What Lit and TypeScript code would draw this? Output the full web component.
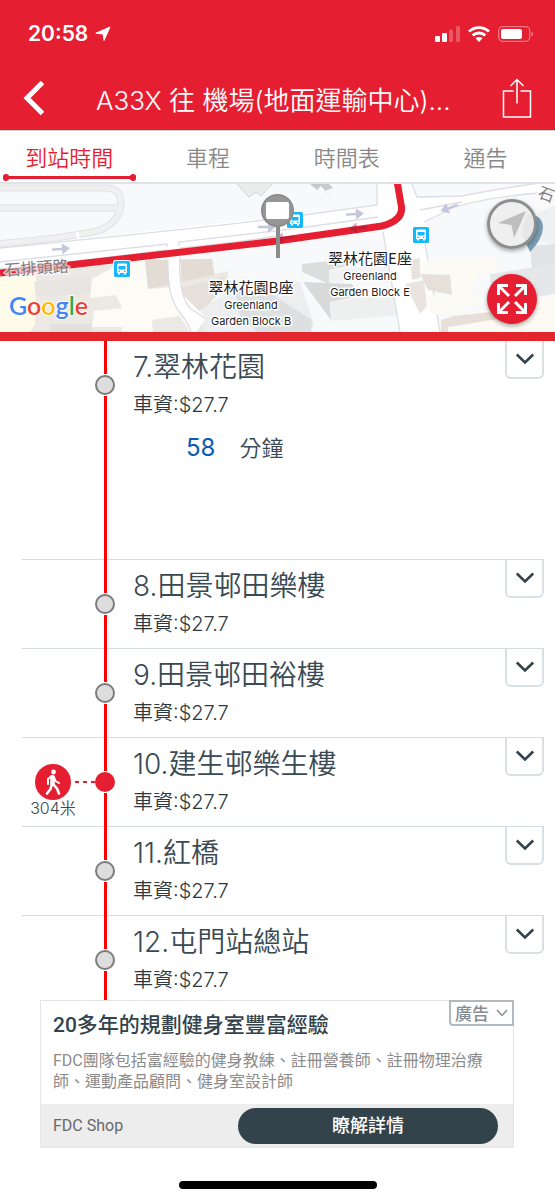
import { LitElement, html, css, svg, nothing } from "lit";
import { customElement, property, state } from "lit/decorators.js";

interface Stop {
  no: number;
  name: string;
  fare: string;
  minutes?: number;
  walk?: string;
}

const STOPS: Stop[] = [
  { no: 7, name: "翠林花園", fare: "$27.7", minutes: 58 },
  { no: 8, name: "田景邨田樂樓", fare: "$27.7" },
  { no: 9, name: "田景邨田裕樓", fare: "$27.7" },
  { no: 10, name: "建生邨樂生樓", fare: "$27.7", walk: "304米" },
  { no: 11, name: "紅橋", fare: "$27.7" },
  { no: 12, name: "屯門站總站", fare: "$27.7" },
];

const TABS = ["到站時間", "車程", "時間表", "通告"];

@customElement("status-bar")
class StatusBar extends LitElement {
  static styles = css`
    :host {
      display: flex;
      align-items: center;
      justify-content: space-between;
      height: 68px;
      padding: 0 21px 0 28px;
    }
    .time {
      display: flex;
      align-items: center;
      gap: 7px;
      font-size: 21px;
      font-weight: 600;
      line-height: 24px;
    }
    .signals {
      display: flex;
      align-items: center;
      gap: 8px;
    }
    svg {
      display: block;
    }
  `;
  render() {
    return html`
      <div class="time">
        <span>20:58</span>
        <svg width="16" height="16" viewBox="0 0 16 16" fill="#fff" stroke="#fff" stroke-width="1" stroke-linejoin="round">
          <path d="M15 1 9 14.500 8.200 8 .8 7.200z" />
        </svg>
      </div>
      <div class="signals">
        <svg width="25" height="16" viewBox="0 0 25 16" fill="#fff">
          <rect x="0" y="10" width="5" height="6" rx="1" />
          <rect x="7" y="7" width="5" height="9" rx="1" />
          <rect x="14" y="3.500" width="4" height="12.500" rx="1" opacity=".25" />
          <rect x="21" y="0" width="4" height="16" rx="1" opacity=".25" />
        </svg>
        <svg width="22" height="16" viewBox="0 0 22 16" fill="none" stroke="#fff" stroke-width="2.900">
          <path d="M1 5.500C6.500.3 15.500.3 21 5.500" />
          <path d="M4.700 9.400c3.600-3.300 9-3.300 12.600 0" />
          <path d="M7.500 12.200c2-1.700 5-1.700 7 0L11 16z" fill="#fff" stroke="none" />
        </svg>
        <svg width="36" height="16" viewBox="0 0 36 16">
          <rect x=".7" y=".7" width="31" height="14.600" rx="4" fill="none" stroke="#fff" stroke-opacity=".4" stroke-width="1.300" />
          <rect x="3" y="3" width="21" height="10" rx="2" fill="#fff" />
          <path d="M33.500 5.500c2 .8 2 4.200 0 5z" fill="#fff" opacity=".45" />
        </svg>
      </div>
    `;
  }
}

const busStop = (x: number, y: number) => svg`
  <g transform="translate(${x} ${y})">
    <rect x="-1" y="-1" width="18" height="18" rx="2" fill="#fff" />
    <rect width="16" height="16" rx="1.500" fill="#14b9fb" />
    <path d="M4 2.500h8l1 1V12h-1v1.500h-2V12H6v1.500H4V12H3V3.500z" fill="#fff" />
    <path d="M4.500 5h7v3.500h-7zM4.500 9.800H6V11H4.500zM10 9.800h1.500V11H10z" fill="#14b9fb" />
  </g>`;

const arrow = (x: number, y: number, turn: number, color = "#c3c6dc") => svg`
  <path transform="translate(${x} ${y}) rotate(${turn})" fill="${color}"
    d="M-9-1.200H1V-5.500L9 0 1 5.500V1.200H-9z" />`;

@customElement("route-map")
class RouteMap extends LitElement {
  static styles = css`
    :host {
      display: block;
      position: relative;
      border-bottom: 9px solid #e3262e;
      background: #f8f9fb;
    }
    .canvas {
      display: block;
      width: 100%;
      height: 148px;
    }
    .zh {
      font-family: "Noto Sans CJK TC", sans-serif;
      font-size: 15px;
      font-weight: 400;
    }
    .en {
      font-size: 11px;
      font-weight: 400;
    }
    .place {
      fill: #1d1d1f;
      stroke: #fff;
      stroke-width: 3px;
      stroke-linejoin: round;
      paint-order: stroke;
      text-anchor: middle;
    }
    .street {
      fill: #7c7c80;
      stroke: #fff;
      stroke-opacity: 0.7;
      stroke-width: 3px;
      paint-order: stroke;
      font-size: 16px;
    }
    .logo {
      font-family: Lato, sans-serif;
      font-size: 25px;
      font-weight: 600;
      stroke: #fff;
      stroke-width: 2px;
      paint-order: stroke;
    }
    .tools {
      position: absolute;
      top: 15px;
      right: 18px;
      display: flex;
      flex-direction: column;
      gap: 25px;
    }
    button {
      display: grid;
      place-items: center;
      width: 50px;
      height: 50px;
      padding: 0;
      border: 0;
      border-radius: 50%;
      background: #e51f31;
      box-shadow: 0 2px 4px rgba(0, 0, 0, 0.35);
    }
    .locate {
      border: 3px solid #8e8e8e;
      background: rgba(238, 238, 238, 0.92);
    }
  `;
  render() {
    return html`
      <svg class="canvas" viewBox="0 0 555 148" preserveAspectRatio="xMidYMid slice">
        <rect width="555" height="148" fill="#f8f9fb" />
        <path d="M0 88 88 80 212 75 215 90 228 87 228 97 214 103 205 148H0z" fill="#ece8e4" />
        <path d="M0 92 36 92 35 140 30 148H0z" fill="#fffbe9" />
        <path d="M34 98 90 92 92 110 36 112z" fill="#e9e5e2" />
        <path d="M120 80 145 77 150 105 173 103 179 132 152 136 153 148H122V143H92L94 127 122 124 116 111 90 114 92 95z" fill="#fdfbf5" />
        <path d="M145 76 212 75 214 91 148 105z" fill="#e3dcd5" />
        <path d="M182 104 225 92 222 107 198 130 184 122z" fill="#e6e0da" />
        <path d="M50 140H92V148H50z" fill="#e4e0dd" />
        <path d="M197 128 240 100 300 98 314 140 310 148H205z" fill="#eceef0" />
        <path d="M235 108 262 104 290 122 312 136 311 148H258L240 132z" fill="#dedfe0" />

        <path d="M302 80 340 76 348 82 329 86V100L302 88z" fill="#dcdddd" />
        <path d="M329 86 410 78 412 94 329 99z" fill="#f1f2f3" />
        <path d="M303 98 352 100 360 112 330 118 331 136z" fill="#d9d9d9" />
        <path d="M331 118 412 106 416 130 331 137z" fill="#eeefef" />

        <g fill="none" stroke-linejoin="round">
          <path d="M-5 4H106Q121 4 121 20 120 38 100 46 70 54-5 60M-5 24H121" stroke="#e1e1e3" stroke-width="7" />
          <path d="M-5 4H106Q121 4 121 20 120 38 100 46 70 54-5 60M-5 24H121" stroke="#f0f0f1" stroke-width="5" />
        </g>
        <path d="M77 48 79 58" stroke="#fff" stroke-width="3" />

        <path d="M0 64 378 21V0H412L417 13 462 12 490 8 555-3V8L482 17 455 24 425 38V59L440 148H400L384 47 180 68 182 110 206 134 196 148H190L171 118 167 70 0 88z" fill="#fff" />
        <g fill="none" stroke="#dcdde5" stroke-width="1.300">
          <path d="M0 64Q190 45 282 34L377 21V0" />
          <path d="M0 78Q90 68 167 60V63M0 85Q90 76 167 66M179 62V58L300 44 378 33M180 64Q250 57 276 52" />
          <path d="M412 0 417 13 462 12Q500 4 555-3M424 38 455 23Q490 12 555 8M420 26 462 18" />
          <path d="M383 48 400 148M425 59 440 148M168 76Q167 112 178 126T191 148M180 72Q178 110 190 124L206 135" />
        </g>

        <path d="M420 77 496 73 498 88 476 92 473 112 492 118 464 124 462 131 430 130 428 112 452 110 448 88 420 92z" fill="#fcfaf4" />
        <path d="M410 76 420 74V94L412 96z" fill="#e9e3de" />
        <path d="M420 90 450 91 452 111 428 106z" fill="#e7e0da" />
        <path d="M405 100 424 96 427 122 420 130 414 118z" fill="#e9e4df" />
        <path d="M441 136 454 132 555 112V148H445z" fill="#fcfaf2" />
        <path d="M441 136 454 132 500 127 498 135 448 143V148H441z" fill="#e7dfd8" />
        <path d="M530 62 555 60V82L532 84z" fill="#e2e3e4" />
        <path d="M490 90 555 80V110L492 120z" fill="#e6e7e8" />
        <path d="M538 28 555 22V60L540 58z" fill="#eff0f2" />

        <path d="M237 0 249 13 256 8 261 12 272 0" fill="#ececea" stroke="#d2d2d2" />
        <path d="M310 0 317 6 321 2 330 12 325 7 333 4 329 0z" fill="#c9c9c9" />

        <path d="M0 89 277 57 382 42Q405 36 401 20L397-3" fill="none" stroke="#e51f31" stroke-width="7" />
        ${arrow(61, 65, -4)} ${arrow(267, 43, 0)} ${arrow(355, 30, -4)} ${arrow(449, 24, 160)}
        ${arrow(358, 44, 175, "rgba(120,20,60,.35)")} ${arrow(284, 54, 175, "rgba(120,20,60,.35)")}

        <path d="M526 30Q543 30 543 44 542 56 530 68L522 50z" fill="#7a9db4" />
        ${busStop(114, 77)} ${busStop(287, 28)} ${busStop(413, 43)}

        <rect x="276" y="42" width="4" height="32" fill="#8b8b8b" />
        <circle cx="277.500" cy="26.500" r="16.500" fill="#969696" />
        <circle cx="277.500" cy="26.500" r="15.800" fill="none" stroke="#858585" />
        <rect x="266" y="18" width="23" height="17" rx="2" fill="#fff" />

        <text class="zh street" transform="translate(5 92) rotate(-4)">石排頭路</text>
        <text class="zh street" transform="translate(537 13) rotate(20)">石</text>
        <text class="zh place" x="370" y="80">翠林花園E座</text>
        <text class="en place" x="370" y="96">Greenland</text>
        <text class="en place" x="370" y="112">Garden Block E</text>
        <text class="zh place" x="251" y="109">翠林花園B座</text>
        <text class="en place" x="251" y="125">Greenland</text>
        <text class="en place" x="251" y="141">Garden Block B</text>
        <text class="logo" x="9" y="131"><tspan fill="#4285f4">G</tspan><tspan fill="#ea4335">o</tspan><tspan fill="#fbbc05">o</tspan><tspan fill="#4285f4">g</tspan><tspan fill="#34a853">l</tspan><tspan fill="#ea4335">e</tspan></text>
      </svg>
      <div class="tools">
        <button class="locate" aria-label="我的位置">
          <svg width="32" height="32" viewBox="0 0 32 32" fill="#bebebe"><path d="M30 3 18 30 15.500 17 2 15z" /></svg>
        </button>
        <button aria-label="放大地圖">
          <svg width="32" height="32" viewBox="0 0 32 32" fill="none" stroke="#fff" stroke-width="3">
            <path d="M2.500 12V2.500H12M3 3 13 13M20 2.500h9.500V12M29 3 19 13M2.500 20v9.500H12M3 29 13 19M20 29.500h9.500V20M29 29 19 19" />
          </svg>
        </button>
      </div>
    `;
  }
}

@customElement("stop-row")
class StopRow extends LitElement {
  @property({ attribute: false }) stop!: Stop;
  static styles = css`
    :host {
      display: grid;
      grid-template-columns: 73px 20px 1fr 39px;
      min-height: 88px;
      margin: 0 11px 0 22px;
      border-top: 1px solid #d5dbdf;
    }
    :host(:first-child) {
      min-height: 218px;
      border-top: 0;
    }
    .walk {
      padding-top: 26px;
    }
    .link {
      display: flex;
      align-items: center;
      gap: 4px;
      padding-left: 13px;
    }
    .dash {
      flex: 1;
      height: 2px;
      background: repeating-linear-gradient(90deg, #e51f31 0 4px, transparent 4px 8px);
    }
    .distance {
      width: 62px;
      font-size: 16px;
      font-weight: 350;
      line-height: 16px;
      text-align: center;
    }
    .rail {
      display: flex;
      flex-direction: column;
      align-items: center;
      gap: 1px;
    }
    .rail::before,
    .rail::after {
      content: "";
      width: 3px;
      background: #f00;
    }
    .rail::before {
      height: 34px;
      margin-top: -1px;
    }
    .rail::after {
      flex: 1;
    }
    .dot {
      box-sizing: border-box;
      width: 20px;
      height: 20px;
      border: 2px solid #7b7b7b;
      border-radius: 50%;
      background: #dcdddc;
    }
    .near {
      border-color: #e51f31;
      background: #e51f31;
    }
    .info {
      padding: 6px 0 11px 18px;
    }
    h2,
    p {
      margin: 0;
      font-weight: 350;
    }
    h2 {
      font-size: 28px;
      line-height: 40px;
    }
    .fare {
      padding-top: 6px;
      font-size: 20px;
      line-height: 24px;
      color: #2c3942;
    }
    .eta {
      display: flex;
      align-items: center;
      gap: 24px;
      padding: 15px 0 0 53px;
      font-size: 22px;
      line-height: 32px;
    }
    .eta strong {
      font-size: 24px;
      font-weight: 400;
      color: #0a5bb3;
    }
    button {
      display: grid;
      place-items: center;
      box-sizing: border-box;
      height: 38px;
      padding: 0;
      border: 2px solid #d9dfe3;
      border-top: 0;
      border-radius: 0 0 6px 6px;
      background: #fff;
    }
    svg {
      display: block;
    }
  `;
  render() {
    const s = this.stop;
    return html`
      <div class="walk">
        ${s.walk
          ? html`<div class="link">
                <svg width="36" height="36" viewBox="0 0 36 36">
                  <circle cx="18" cy="18" r="18" fill="#e51f31" />
                  <circle cx="18.500" cy="8" r="2.400" fill="#fff" />
                  <g fill="none" stroke="#fff" stroke-linecap="round" stroke-linejoin="round">
                    <path d="M17.500 13v7" stroke-width="4.500" />
                    <path d="M16 12.500 13 15v5M19 13l1.500 4 3.500 2" stroke-width="2" />
                    <path d="M16.800 20.500 15.500 25 12 29.500M18 20l4 4.500 2 5" stroke-width="2.600" />
                  </g>
                </svg>
                <span class="dash"></span>
              </div>
              <div class="distance">${s.walk}</div>`
          : nothing}
      </div>
      <div class="rail"><span class="dot ${s.walk ? "near" : ""}"></span></div>
      <div class="info">
        <h2>${s.no}.${s.name}</h2>
        <p class="fare">車資:${s.fare}</p>
        ${s.minutes ? html`<p class="eta"><strong>${s.minutes}</strong><span>分鐘</span></p>` : nothing}
      </div>
      <button aria-label="展開 ${s.name}">
        <svg width="20" height="12" viewBox="0 0 20 12" fill="none" stroke="#33434c" stroke-width="2.600">
          <path d="M1.800 1.500 10 9.500l8.200-8" />
        </svg>
      </button>
    `;
  }
}

@customElement("ad-card")
class AdCard extends LitElement {
  static styles = css`
    :host {
      display: block;
      position: relative;
      margin: 0 41px 0 40px;
      border: 1px solid #e3e5e6;
      background: #fff;
      font-family: Roboto, "Noto Sans CJK TC", sans-serif;
    }
    h3 {
      margin: 0;
      padding: 10px 72px 0 12px;
      font-size: 21px;
      font-weight: 500;
      line-height: 28px;
      color: #33434c;
    }
    p {
      margin: 0;
      padding: 11px 22px 12px 12px;
      font-size: 16px;
      line-height: 21px;
      color: #8b8b8b;
    }
    .foot {
      display: flex;
      align-items: center;
      justify-content: space-between;
      height: 43px;
      padding: 0 15px 0 12px;
      background: #ededed;
      font-size: 16px;
      color: #686868;
    }
    .cta {
      width: 260px;
      height: 36px;
      border-radius: 18px;
      background: #33434b;
      color: #fff;
      font-size: 18px;
      font-weight: 500;
      line-height: 36px;
      text-align: center;
      text-decoration: none;
    }
    .mark {
      position: absolute;
      top: -1px;
      right: -1px;
      display: flex;
      align-items: center;
      gap: 7px;
      box-sizing: border-box;
      height: 26px;
      padding: 0 4px;
      border: 2px solid #b3babf;
      border-radius: 0 0 0 4px;
      background: #fff;
      color: #858d93;
      font: 500 17px/20px "Noto Sans CJK TC", sans-serif;
    }
  `;
  render() {
    return html`
      <h3>20多年的規劃健身室豐富經驗</h3>
      <p>FDC團隊包括富經驗的健身教練、註冊營養師、註冊物理治療師、運動產品顧問、健身室設計師</p>
      <div class="foot">
        <span>FDC Shop</span>
        <a class="cta" href="#shop">瞭解詳情</a>
      </div>
      <button class="mark">
        廣告
        <svg width="12" height="8" viewBox="0 0 12 8" fill="none" stroke="#858d93" stroke-width="1.500"><path d="m1 1 5 5.500L11 1" /></svg>
      </button>
    `;
  }
}

@customElement("app-root")
class AppRoot extends LitElement {
  @state() active = 0;
  static styles = css`
    :host {
      display: flex;
      flex-direction: column;
      height: 100vh;
      background: #fff;
      color: #3a4a54;
      font-family: Inter, "Noto Sans CJK TC", sans-serif;
    }
    header {
      background: #e51f31;
      color: #fff;
    }
    .bar {
      display: flex;
      align-items: center;
      box-sizing: border-box;
      height: 62px;
      padding: 0 23px 2px;
    }
    .icon {
      display: block;
      padding: 0;
      border: 0;
      background: none;
    }
    .icon svg {
      display: block;
    }
    h1 {
      flex: 1;
      min-width: 0;
      margin: 0;
      padding: 6px 0 0 51px;
      font-size: 26px;
      font-weight: 350;
      line-height: 32px;
      white-space: nowrap;
    }
    nav {
      display: grid;
      grid-template-columns: repeat(4, 1fr);
      border-top: 1px solid #cfcfcf;
      border-bottom: 2px solid #dde3e7;
    }
    .tab {
      display: flex;
      flex-direction: column;
      padding: 8px 3px 1px;
      border: 0;
      background: none;
      color: #888;
      font: 350 22px/34px "Noto Sans CJK TC", sans-serif;
    }
    .tab span {
      align-self: center;
    }
    .tab::after {
      content: "";
      align-self: stretch;
      height: 7px;
      margin-top: 1px;
    }
    .on {
      color: #e51f31;
    }
    .on::after {
      background:
        radial-gradient(circle at 3px 50%, #e51f31 3px, transparent 4px),
        radial-gradient(circle at calc(100% - 3px) 50%, #e51f31 3px, transparent 4px),
        linear-gradient(#e51f31, #e51f31) center / calc(100% - 6px) 3px no-repeat;
    }
    main {
      flex: 1;
      min-height: 0;
      overflow-y: auto;
      scrollbar-width: none;
    }
    .home {
      flex: none;
      width: 198px;
      height: 8px;
      margin: 33px auto 11px;
      border-radius: 4px;
      background: #000;
    }
  `;
  render() {
    return html`
      <header>
        <status-bar></status-bar>
        <div class="bar">
          <button class="icon" aria-label="返回">
            <svg width="22" height="36" viewBox="0 0 22 36" fill="none" stroke="#fff" stroke-width="5">
              <path d="M19.500 2.500 4 18l15.500 15.500" />
            </svg>
          </button>
          <h1>A33X 往 機場(地面運輸中心)...</h1>
          <button class="icon" aria-label="分享">
            <svg width="30" height="42" viewBox="0 0 30 42" fill="none" stroke="#fff" stroke-width="1.500">
              <path d="M11.500 14H1.500v26h27V14h-10M15 26.500V2.500M8.500 9 15 2.500 21.500 9" />
            </svg>
          </button>
        </div>
      </header>
      <nav>
        ${TABS.map(
          (t, i) => html`<button class="tab ${i === this.active ? "on" : ""}" @click=${() => (this.active = i)}>
            <span>${t}</span>
          </button>`
        )}
      </nav>
      <route-map></route-map>
      <main>${STOPS.map((s) => html`<stop-row .stop=${s}></stop-row>`)}</main>
      <ad-card></ad-card>
      <div class="home"></div>
    `;
  }
}
